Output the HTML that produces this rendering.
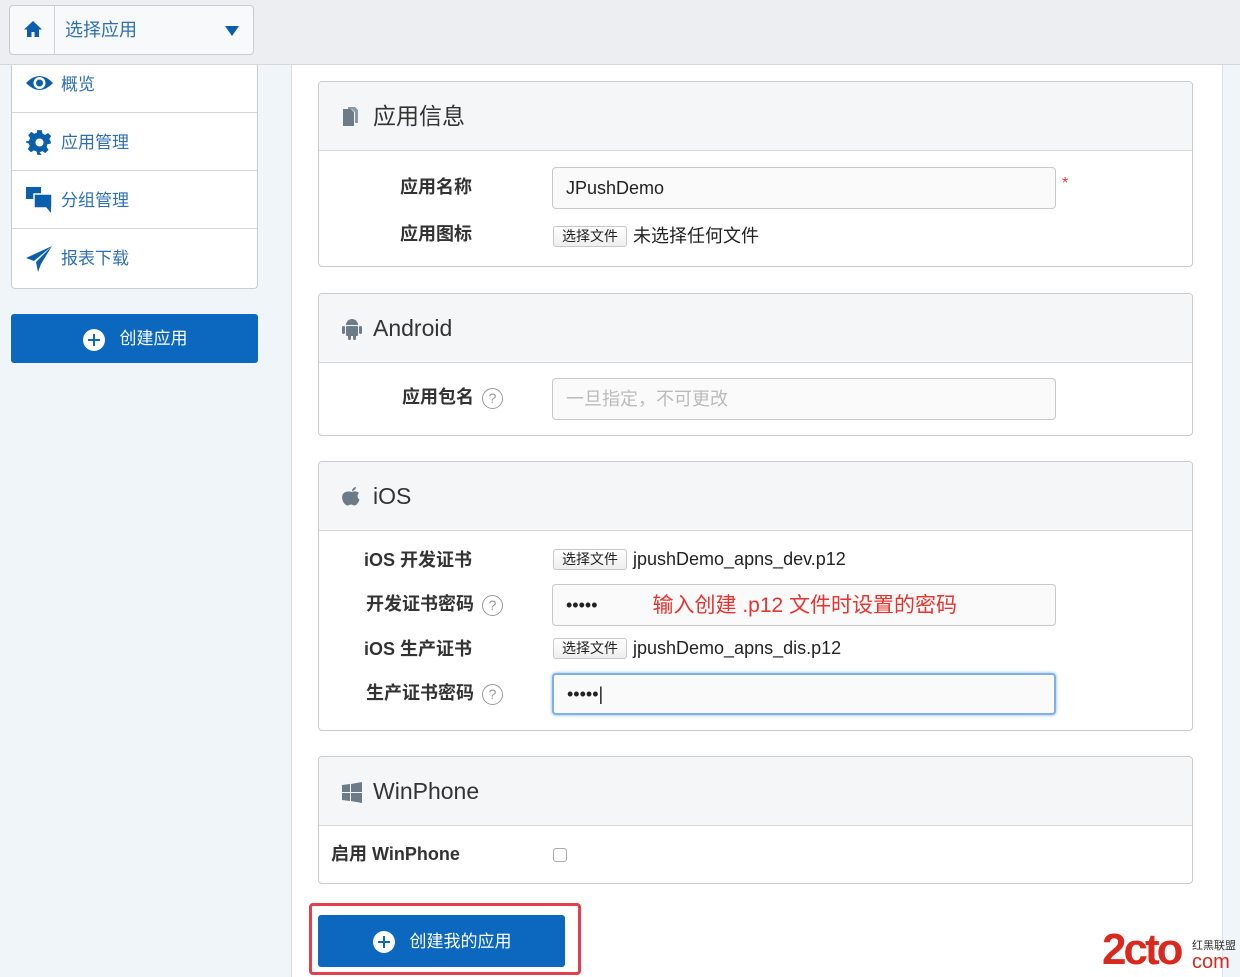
<!DOCTYPE html>
<html><head><meta charset="utf-8"><style>
*{box-sizing:border-box;margin:0;padding:0}
body{width:1240px;height:977px;overflow:hidden;background:#fff;font-family:"Liberation Sans","Noto Sans CJK SC",sans-serif;position:relative;line-height:1.2}
.abs{position:absolute}
.top{left:0;top:0;width:1240px;height:65px;background:#eceef1;border-bottom:1px solid #d6d8db}
.side{left:0;top:65px;width:292px;height:912px;background:#f0f5fa;border-right:1px solid #d8dce0}
.rstrip{left:1222px;top:65px;width:18px;height:912px;background:#f0f5fa;border-left:1px solid #dde}
.sel{left:9px;top:5px;width:245px;height:50px;background:#f7f9fb;border:1px solid #c9ccd0;border-radius:4px}
.menu{left:11px;top:65px;width:247px;height:224px;background:#fff;border:1px solid #c9ccd0;border-top:none;border-radius:0 0 4px 4px}
.mi{position:absolute;left:0;width:245px;border-bottom:1px solid #d3d6da;color:#2e6fb3;font-size:17px}
.btn{background:#0b68be;color:#fff;border-radius:3px;font-size:17px;display:flex;align-items:center;justify-content:center;padding-top:2px}
.panel{left:318px;width:875px;border:1px solid #c8cbcf;border-radius:4px;background:#fff;overflow:hidden}
.ph{height:69px;background:#f5f6f7;border-bottom:1px solid #d6d8db;font-size:23px;color:#333;display:flex;align-items:center;padding-left:22px;padding-top:2px}
.ph svg{margin-right:10px}
.lb{position:absolute;font-size:18px;font-weight:bold;color:#333;text-align:right}
.inp{position:absolute;left:233px;width:504px;height:42px;border:1px solid #c6c8cb;border-radius:4px;background:#fafafa;font-size:18px;padding-left:13px;display:flex;align-items:center;color:#222;padding-top:1px}
.fb{position:absolute;left:234px;font-size:14px;color:#222;display:flex;align-items:center}
.fb span.b{border:1px solid #c8c8c8;border-radius:3px;background:linear-gradient(#fff,#eee);padding:1px 8px;font-size:14px;margin-right:6px}
.fb span.t{font-size:18px}
.q{display:inline-block;width:21px;height:21px;border:1px solid #999;border-radius:50%;font-size:14px;color:#999;text-align:center;line-height:19px;font-weight:normal;vertical-align:middle;margin-left:8px}
</style></head><body>
<div class="abs top"></div>
<div class="abs side"></div>
<div class="abs rstrip"></div>
<div class="abs sel">
 <div class="abs" style="left:44px;top:0;width:1px;height:48px;background:#d0d3d6"></div>
 <svg class="abs" style="left:13px;top:14px" width="20" height="18" viewBox="0 0 20 18"><path d="M10 1L1 9.5h3V17h4.5v-5h3v5H16V9.5h3z" fill="#0b5faa"/></svg>
 <div class="abs" style="left:55px;top:14px;font-size:18px;color:#2e6fb3">选择应用</div>
 <svg class="abs" style="left:215px;top:20px" width="14" height="10"><path d="M0 0h14L7 10z" fill="#0b5faa"/></svg>
</div>
<div class="abs menu">
 <div class="mi" style="top:0;height:48px"><svg class="abs" style="left:13px;top:8px" width="29" height="20" viewBox="0 0 29 20"><path d="M1 10Q14.5-4 28 10Q14.5 24 1 10z" fill="#0b5faa"/><circle cx="14.5" cy="10" r="6" fill="#fff"/><circle cx="14.5" cy="10" r="3.5" fill="#0b5faa"/></svg><span class="abs" style="left:49px;top:10px">概览</span></div>
 <div class="mi" style="top:48px;height:58px"><svg class="abs" style="left:14px;top:16px" width="27" height="27" viewBox="0 0 24 24"><path d="M10 1h4l.6 3 2.4 1.2 2.6-1.7 2.8 2.8-1.7 2.6L22 11v2l-3 .6-.7 2.4 1.7 2.6-2.8 2.8-2.6-1.7-2.6 1.1L14 23h-4l-.6-3-2.4-1-2.6 1.7-2.8-2.8L3.3 15 2.5 13 0 12v-1l2.6-.6 1-2.4L2 5.3 4.7 2.5 7.3 4.2 9.6 3.3z" fill="#0b5faa"/><circle cx="12" cy="12" r="3.6" fill="#fff"/></svg><span class="abs" style="left:49px;top:20px">应用管理</span></div>
 <div class="mi" style="top:106px;height:58px"><svg class="abs" style="left:13px;top:15px" width="29" height="28" viewBox="0 0 29 28"><rect x="1" y="1" width="15" height="12" fill="#0b5faa"/><rect x="9" y="8" width="18" height="14" fill="#0b5faa" stroke="#fff" stroke-width="1.5"/><path d="M21 21l5 6v-6z" fill="#0b5faa"/></svg><span class="abs" style="left:49px;top:20px">分组管理</span></div>
 <div class="mi" style="top:164px;height:58px;border:none"><svg class="abs" style="left:13px;top:16px" width="28" height="28" viewBox="0 0 28 28"><path d="M27 1L1 13l8 3zM27 1L11 17l2 10 3-8z" fill="#0b5faa"/></svg><span class="abs" style="left:49px;top:20px">报表下载</span></div>
</div>
<div class="abs btn" style="left:11px;top:314px;width:247px;height:49px"><svg width="24" height="24" style="margin-right:14px"><circle cx="12" cy="12" r="11" fill="#fff"/><path d="M12 6v12M6 12h12" stroke="#0b68be" stroke-width="2"/></svg>创建应用</div>

<div class="abs panel" style="top:81px;height:186px">
 <div class="ph"><svg width="22" height="22" viewBox="0 0 22 22"><path d="M2 3h8l3 3v14H2z" fill="#6b7b88"/><path d="M7 1h7l3 3v13H14V6l-3-3H7z" fill="#8a98a4"/></svg>应用信息</div>
 <div class="lb" style="left:0;width:153px;top:95px">应用名称</div>
 <div class="inp" style="top:85px">JPushDemo</div>
 <div class="abs" style="left:743px;top:92px;color:#e33;font-size:16px">*</div>
 <div class="lb" style="left:0;width:153px;top:142px">应用图标</div>
 <div class="fb" style="top:144px"><span class="b">选择文件</span><span class="t">未选择任何文件</span></div>
</div>

<div class="abs panel" style="top:293px;height:143px">
 <div class="ph"><svg width="22" height="24" viewBox="0 0 22 24"><path d="M5 8a6 6 0 0 1 12 0z" fill="#6b7b88"/><rect x="5" y="9" width="12" height="10" rx="1" fill="#6b7b88"/><rect x="1" y="9" width="3" height="8" rx="1.5" fill="#6b7b88"/><rect x="18" y="9" width="3" height="8" rx="1.5" fill="#6b7b88"/><rect x="7" y="18" width="3" height="5" rx="1.5" fill="#6b7b88"/><rect x="12" y="18" width="3" height="5" rx="1.5" fill="#6b7b88"/></svg>Android</div>
 <div class="lb" style="left:0;width:184px;top:93px">应用包名<span class="q">?</span></div>
 <div class="inp" style="top:84px;color:#bbb">一旦指定，不可更改</div>
</div>

<div class="abs panel" style="top:461px;height:270px">
 <div class="ph"><svg width="22" height="24" viewBox="0 0 22 24"><path d="M11 7c2-1 5-1 7 1-2 1.5-2 5 .5 6.5-1 3-3 6-5 6-1.5 0-2-1-3.5-1s-2 1-3.5 1C3 20 0 14 1.5 10 3 6.5 7 6 11 7zM11 6c0-2 2-4 4-4 0 2-2 4-4 4z" fill="#6b7b88"/></svg>iOS</div>
 <div class="lb" style="left:0;width:153px;top:88px">iOS 开发证书</div>
 <div class="fb" style="top:87px"><span class="b">选择文件</span><span class="t">jpushDemo_apns_dev.p12</span></div>
 <div class="lb" style="left:0;width:184px;top:132px">开发证书密码<span class="q">?</span></div>
 <div class="inp" style="top:122px">•••••<span style="color:#e8322e;font-size:21px;margin-left:55px">输入创建 .p12 文件时设置的密码</span></div>
 <div class="lb" style="left:0;width:153px;top:177px">iOS 生产证书</div>
 <div class="fb" style="top:176px"><span class="b">选择文件</span><span class="t">jpushDemo_apns_dis.p12</span></div>
 <div class="lb" style="left:0;width:184px;top:221px">生产证书密码<span class="q">?</span></div>
 <div class="inp" style="top:211px;border:2px solid #7fb1e8;box-shadow:0 0 3px #7fb1e8">•••••|</div>
</div>

<div class="abs panel" style="top:756px;height:128px">
 <div class="ph"><svg width="22" height="22" viewBox="0 0 22 22"><path d="M1 4l8-1v8H1zM10 3l11-2v10H10zM1 12h8v8l-8-1zM10 12h11v10l-11-2z" fill="#6b7b88"/></svg>WinPhone</div>
 <div class="lb" style="left:12px;top:87px">启用 WinPhone</div>
 <div class="abs" style="left:234px;top:91px;width:14px;height:14px;border:1px solid #aaa;border-radius:3px"></div>
</div>

<div class="abs" style="left:309px;top:903px;width:272px;height:72px;border:3px solid #e2404f;border-radius:4px"></div>
<div class="abs btn" style="left:318px;top:915px;width:247px;height:52px"><svg width="24" height="24" style="margin-right:14px"><circle cx="12" cy="12" r="11" fill="#fff"/><path d="M12 6v12M6 12h12" stroke="#0b68be" stroke-width="2"/></svg>创建我的应用</div>
<div class="abs" style="left:1102px;top:928px;font-size:44px;font-weight:bold;color:#d9281d;letter-spacing:-3px;line-height:44px">2cto</div>
<div class="abs" style="left:1192px;top:940px;font-size:11px;color:#333">红黑联盟</div>
<div class="abs" style="left:1192px;top:950px;font-size:20px;color:#d9281d">com</div>
</body></html>
